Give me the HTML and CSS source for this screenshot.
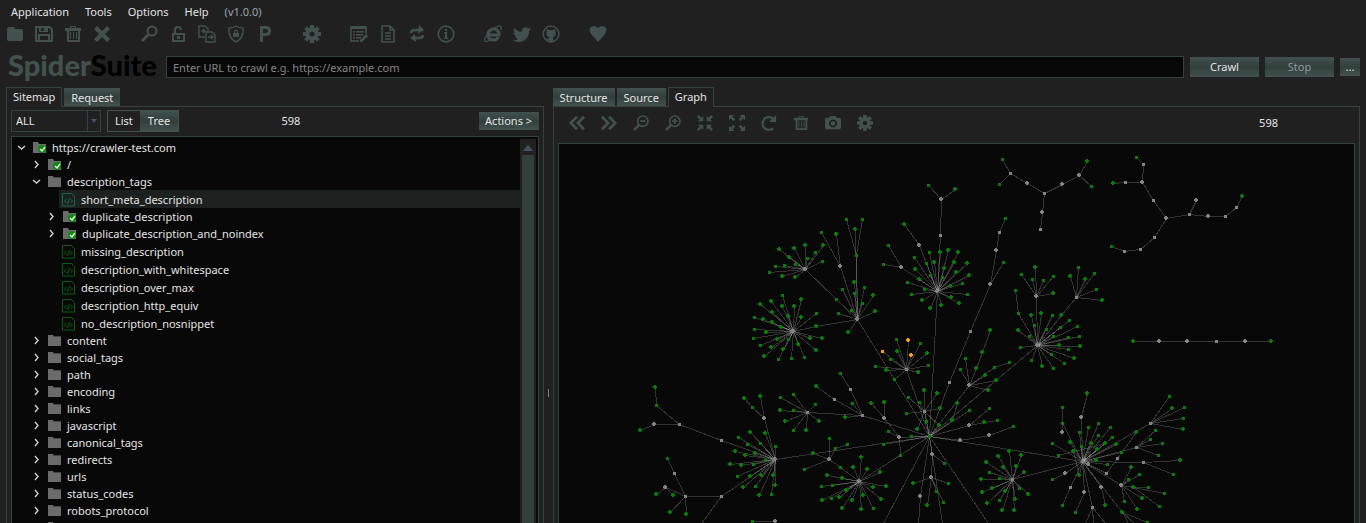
FILE: index.html
```html
<!DOCTYPE html>
<html lang="en">
<head>
<meta charset="utf-8">
<title>SpiderSuite</title>
<link rel="stylesheet" href="styles.css">
</head>
<body>
<svg class="symbols" aria-hidden="true">
  <symbol id="folder" viewBox="0 0 18 18"><path d="M1 4q0-2 2-2h4q2 0 2 2h6q2 0 2 2v8q0 2-2 2H3q-2 0-2-2z"/></symbol>
  <symbol id="save" viewBox="0 0 18 18"><path fill-rule="evenodd" d="M0 1h15l3 3v13H0zM2 3v12h1V9h12v6h1V5l-2-2h-1v4H4V3zm4 0v3h3V3zm-1 8v4h8v-4z"/></symbol>
  <symbol id="trash" viewBox="0 0 18 18"><path fill-rule="evenodd" d="M6 1h6v2h5v3h-1v11H3V6H1V3h5zm1 1v1h4V2zM5 6v9h9V6zm1 1h1v7H6zm3 0h1v7H9zm3 0h1v7h-1z"/></symbol>
  <symbol id="close" viewBox="0 0 18 18"><path d="M4 1l5 5 5-5 3 3-5 5 5 5-3 3-5-5-5 5-3-3 5-5-5-5z"/></symbol>
  <symbol id="search" viewBox="0 0 18 18"><circle cx="12" cy="6" r="4.5" fill="none" stroke="currentColor" stroke-width="2"/><path d="M7 9l2 2-6 6-2-2z"/></symbol>
  <symbol id="unlock" viewBox="0 0 18 18"><path fill-rule="evenodd" d="M3 8h2V5q0-4 4-4t4 4h-2q0-2-2-2T7 5v3h9v9H3zm2 2v5h9v-5zm3 1h3v3H8z"/></symbol>
  <symbol id="transfer" viewBox="0 0 18 18"><path fill="none" stroke="currentColor" stroke-width="1.4" d="M7 12H1V1h6l3 3v2M8 7h6l3 3v7H8zM3 6h4M5 4l2 2-2 2M10 12h5M13 10l2 2-2 2"/></symbol>
  <symbol id="shield" viewBox="0 0 18 18"><path fill="none" stroke="currentColor" stroke-width="1.5" d="M9 1q3 2 7 2 1 10-7 14Q1 13 2 3q4 0 7-2z"/><path d="M6 8h1V6q2-3 4 0v2h1v4H6zm2 0h2V6.500q-1-1-2 0z"/></symbol>
  <symbol id="parking" viewBox="0 0 18 18"><path fill-rule="evenodd" d="M4 1h6q5 0 5 5t-5 5H7v6H4zm3 3v4h3q2 0 2-2t-2-2z"/></symbol>
  <symbol id="gear" viewBox="0 0 18 18"><path fill="none" stroke="currentColor" stroke-width="4" d="M9 0v4M9 14v4M0 9h4M14 9h4M2.600 2.600l3 3M12.400 12.400l3 3M15.400 2.600l-3 3M2.600 15.400l3-3"/><circle cx="9" cy="9" r="4.500" fill="none" stroke="currentColor" stroke-width="4"/></symbol>
  <symbol id="form" viewBox="0 0 18 18"><path fill="none" stroke="currentColor" stroke-width="1.500" d="M9 16H1V2h15v7"/><path d="M1 1h15v3H1zm2 5h2v1.500H3zm3 0h8v1.500H6zM3 9h2v1.500H3zm3 0h7v1.500H6zm-3 3h2v1.500H3zm3 0h5v1.500H6zm10-3l2 2-6 6h-2v-2z"/></symbol>
  <symbol id="doc" viewBox="0 0 18 18"><path fill="none" stroke="currentColor" stroke-width="1.600" d="M4 1h7l4 4v12H3V1zM11 1v4h4M6 8h6M6 11h6M6 14h6"/></symbol>
  <symbol id="sync" viewBox="0 0 18 18"><path fill="none" stroke="currentColor" stroke-width="2.400" d="M3 8q0-3 4-3h5M15 10q0 3-4 3H6"/><path d="M11 0l5 5-6 4zM7 9l1 8-6-4z"/></symbol>
  <symbol id="info" viewBox="0 0 18 18"><circle cx="9" cy="9" r="7.800" fill="none" stroke="currentColor" stroke-width="1.700"/><path d="M8 4h2v2H8zM7 7h3v6h1v1H7v-1h1V8H7z"/></symbol>
  <symbol id="browser" viewBox="0 0 18 18"><path fill="none" stroke="currentColor" stroke-width="3" d="M5 10h10q0-6-5-6-6 0-6 6 0 5 6 5 3 0 4-3"/><path fill="none" stroke="currentColor" stroke-width="1.300" d="M17 5q1-5-3-4-8 3-13 12-1 5 3 3l3-1"/></symbol>
  <symbol id="bird" viewBox="0 0 16 16"><path d="M5 15c6 0 9.300-5 9.300-9.300v-.4A6.700 6.700 0 0 0 16 3.500a6.500 6.500 0 0 1-1.900.5 3.300 3.300 0 0 0 1.400-1.800 6.500 6.500 0 0 1-2 .8A3.300 3.300 0 0 0 7.900 6 9.300 9.300 0 0 1 1.100 2.600a3.300 3.300 0 0 0 1 4.400A3.300 3.300 0 0 1 .6 6.600a3.300 3.300 0 0 0 2.600 3.200 3.300 3.300 0 0 1-1.400.1 3.300 3.300 0 0 0 3 2.300A6.600 6.600 0 0 1 0 13.600 9.300 9.300 0 0 0 5 15"/></symbol>
  <symbol id="cat" viewBox="0 0 18 18"><circle cx="9" cy="9" r="7.900" fill="none" stroke="currentColor" stroke-width="1.500"/><path d="M5 4l2 1.200q2-.6 4 0L13 4q.7 1.300.3 2.600Q14 8 13.600 9.500 13 12 10.500 12.200q.7.800.7 1.800v3H7v-2q-2 .2-3-2 1.500 0 3 .8 0-1 .6-1.600Q5 12 4.400 9.500 4 8 4.700 6.600 4.300 5.300 5 4z"/></symbol>
  <symbol id="heart" viewBox="0 0 18 18"><path d="M9 17L2 9Q0 6 1 3q3-4 8 0 5-4 8 0 1 3-1 6z"/></symbol>
  <symbol id="back" viewBox="0 0 18 18"><path fill="none" stroke="currentColor" stroke-width="3" d="M9 2L2 9l7 7M17 2l-7 7 7 7"/></symbol>
  <symbol id="forward" viewBox="0 0 18 18"><path fill="none" stroke="currentColor" stroke-width="3" d="M1 2l7 7-7 7M9 2l7 7-7 7"/></symbol>
  <symbol id="zoom-out" viewBox="0 0 18 18"><circle cx="11" cy="7" r="5.800" fill="none" stroke="currentColor" stroke-width="1.800"/><path d="M8 6h6v2H8zM6 10l2 2-6 6-2-2z"/></symbol>
  <symbol id="zoom-in" viewBox="0 0 18 18"><circle cx="11" cy="7" r="5.800" fill="none" stroke="currentColor" stroke-width="1.800"/><path d="M8 6h2V4h2v2h2v2h-2v2h-2V8H8zM6 10l2 2-6 6-2-2z"/></symbol>
  <symbol id="shrink" viewBox="0 0 18 18"><path d="M2 0l3 3 2-2v6H1l2-2-3-3zM16 0l-3 3-2-2v6h6l-2-2 3-3zM2 18l3-3 2 2v-6H1l2 2-3 3zM16 18l-3-3-2 2v-6h6l-2 2 3 3z"/></symbol>
  <symbol id="expand" viewBox="0 0 18 18"><path d="M0 0h6L4 2l3 3-2 2-3-3-2 2zM18 0h-6l2 2-3 3 2 2 3-3 2 2zM0 18h6l-2-2 3-3-2-2-3 3-2-2zM18 18h-6l2-2-3-3 2-2 3 3 2-2z"/></symbol>
  <symbol id="reload" viewBox="0 0 18 18"><path fill="none" stroke="currentColor" stroke-width="2.400" d="M14 4Q9 0 4 4 0 9 3 14q5 5 11 1"/><path d="M17 0v8H9z"/></symbol>
  <symbol id="camera" viewBox="0 0 18 18"><path fill-rule="evenodd" d="M0 5q0-2 2-2h3l1-2h6l1 2h3q2 0 2 2v9q0 2-2 2H2q-2 0-2-2zm9 0a4.500 4.500 0 1 0 .1 0zm0 2a2.500 2.500 0 1 1-.1 0z"/></symbol>
  <symbol id="dir" viewBox="0 0 14 13"><path fill="#6b6b6b" d="M0 1h5l1 2h7v9H0z"/><path fill="#444" d="M6 2h7v1H6z"/></symbol>
  <symbol id="dir-ok" viewBox="0 0 14 13"><path fill="#6b6b6b" d="M0 1h5l1 2h7v9H0z"/><circle cx="9" cy="8" r="4" fill="#0b8a0b"/><path fill="none" stroke="#eee" stroke-width="1.400" d="M7 8l2 2 3-4"/></symbol>
  <symbol id="file" viewBox="0 0 14 14"><path fill="none" stroke="currentColor" d="M.5.5h9l3 3v9.500H.5zM4.500 6L2.500 8l2 2M8.500 6l2 2-2 2M7.500 5l-2 6"/></symbol>
  <symbol id="open" viewBox="0 0 9 9"><path fill="none" stroke="#d0d0d0" stroke-width="1.400" d="M1 3l3.500 3L8 3"/></symbol>
  <symbol id="shut" viewBox="0 0 9 9"><path fill="none" stroke="#d0d0d0" stroke-width="1.400" d="M3 1l3 3.500L3 8"/></symbol>
</svg>

<header class="header">
  <nav class="menu">
    <button>Application</button><button>Tools</button><button>Options</button><button>Help</button>
    <span class="version">(v1.0.0)</span>
  </nav>
  <div class="toolbar">
    <div class="group">
      <button aria-label="Open"><svg><use href="#folder"/></svg></button>
      <button aria-label="Save"><svg><use href="#save"/></svg></button>
      <button aria-label="Delete"><svg><use href="#trash"/></svg></button>
      <button aria-label="Close"><svg><use href="#close"/></svg></button>
    </div>
    <div class="group">
      <button aria-label="Search"><svg><use href="#search"/></svg></button>
      <button aria-label="Decode"><svg><use href="#unlock"/></svg></button>
      <button aria-label="Compare"><svg><use href="#transfer"/></svg></button>
      <button aria-label="Security"><svg><use href="#shield"/></svg></button>
      <button aria-label="Proxy"><svg><use href="#parking"/></svg></button>
    </div>
    <div class="group">
      <button aria-label="Settings"><svg><use href="#gear"/></svg></button>
    </div>
    <div class="group">
      <button aria-label="Notes"><svg><use href="#form"/></svg></button>
      <button aria-label="Report"><svg><use href="#doc"/></svg></button>
      <button aria-label="Update"><svg><use href="#sync"/></svg></button>
      <button aria-label="About"><svg><use href="#info"/></svg></button>
    </div>
    <div class="group">
      <button aria-label="Website"><svg><use href="#browser"/></svg></button>
      <button aria-label="Twitter"><svg><use href="#bird"/></svg></button>
      <button aria-label="GitHub"><svg><use href="#cat"/></svg></button>
    </div>
    <div class="group">
      <button aria-label="Sponsor"><svg><use href="#heart"/></svg></button>
    </div>
  </div>
  <form class="crawl">
    <div class="logo">Spider<span class="logo-dark">Suite</span></div>
    <input class="url" type="text" aria-label="URL to crawl" placeholder="Enter URL to crawl e.g. https://example.com">
    <button class="btn btn-wide" type="button">Crawl</button>
    <button class="btn btn-wide" type="button" disabled>Stop</button>
    <button class="btn btn-more" type="button">...</button>
  </form>
</header>

<main class="panes">
  <section class="pane pane-left">
    <div class="tabs" role="tablist">
      <button class="tab active" role="tab" aria-selected="true">Sitemap</button>
      <button class="tab" role="tab" aria-selected="false">Request</button>
    </div>
    <div class="panel">
      <div class="filters">
        <div class="combo"><select aria-label="Filter"><option>ALL</option></select></div>
        <div class="toggle"><button>List</button><button class="on">Tree</button></div>
        <output class="total">598</output>
        <button class="btn btn-actions">Actions &gt;</button>
      </div>
      <div class="treebox">
        <ul class="tree">
          <li class="row"><svg class="arrow"><use href="#open"/></svg><svg class="icon"><use href="#dir-ok"/></svg>https://crawler-test.com</li>
          <li class="row l1"><svg class="arrow"><use href="#shut"/></svg><svg class="icon"><use href="#dir-ok"/></svg>/</li>
          <li class="row l1"><svg class="arrow"><use href="#open"/></svg><svg class="icon"><use href="#dir"/></svg>description_tags</li>
          <li class="row file selected"><svg class="icon"><use href="#file"/></svg><span class="name">short_meta_description</span></li>
          <li class="row l2"><svg class="arrow"><use href="#shut"/></svg><svg class="icon"><use href="#dir-ok"/></svg>duplicate_description</li>
          <li class="row l2"><svg class="arrow"><use href="#shut"/></svg><svg class="icon"><use href="#dir-ok"/></svg>duplicate_description_and_noindex</li>
          <li class="row file"><svg class="icon"><use href="#file"/></svg><span class="name">missing_description</span></li>
          <li class="row file"><svg class="icon"><use href="#file"/></svg><span class="name">description_with_whitespace</span></li>
          <li class="row file"><svg class="icon"><use href="#file"/></svg><span class="name">description_over_max</span></li>
          <li class="row file"><svg class="icon"><use href="#file"/></svg><span class="name">description_http_equiv</span></li>
          <li class="row file"><svg class="icon"><use href="#file"/></svg><span class="name">no_description_nosnippet</span></li>
          <li class="row l1"><svg class="arrow"><use href="#shut"/></svg><svg class="icon"><use href="#dir"/></svg>content</li>
          <li class="row l1"><svg class="arrow"><use href="#shut"/></svg><svg class="icon"><use href="#dir"/></svg>social_tags</li>
          <li class="row l1"><svg class="arrow"><use href="#shut"/></svg><svg class="icon"><use href="#dir"/></svg>path</li>
          <li class="row l1"><svg class="arrow"><use href="#shut"/></svg><svg class="icon"><use href="#dir"/></svg>encoding</li>
          <li class="row l1"><svg class="arrow"><use href="#shut"/></svg><svg class="icon"><use href="#dir"/></svg>links</li>
          <li class="row l1"><svg class="arrow"><use href="#shut"/></svg><svg class="icon"><use href="#dir"/></svg>javascript</li>
          <li class="row l1"><svg class="arrow"><use href="#shut"/></svg><svg class="icon"><use href="#dir"/></svg>canonical_tags</li>
          <li class="row l1"><svg class="arrow"><use href="#shut"/></svg><svg class="icon"><use href="#dir"/></svg>redirects</li>
          <li class="row l1"><svg class="arrow"><use href="#shut"/></svg><svg class="icon"><use href="#dir"/></svg>urls</li>
          <li class="row l1"><svg class="arrow"><use href="#shut"/></svg><svg class="icon"><use href="#dir"/></svg>status_codes</li>
          <li class="row l1"><svg class="arrow"><use href="#shut"/></svg><svg class="icon"><use href="#dir"/></svg>robots_protocol</li>
          <li class="row l1"><svg class="arrow"></svg><svg class="icon"><use href="#dir"/></svg></li>
        </ul>
        <div class="scroll"><span class="scroll-up"></span><span class="scroll-thumb"></span></div>
      </div>
    </div>
  </section>
  <div class="splitter"><span class="grip"></span></div>
  <section class="pane pane-right">
    <div class="tabs" role="tablist">
      <button class="tab" role="tab" aria-selected="false">Structure</button>
      <button class="tab" role="tab" aria-selected="false">Source</button>
      <button class="tab active" role="tab" aria-selected="true">Graph</button>
    </div>
    <div class="panel">
      <div class="graph-tools">
        <button aria-label="Back"><svg><use href="#back"/></svg></button>
        <button aria-label="Forward"><svg><use href="#forward"/></svg></button>
        <button aria-label="Zoom out"><svg><use href="#zoom-out"/></svg></button>
        <button aria-label="Zoom in"><svg><use href="#zoom-in"/></svg></button>
        <button aria-label="Shrink"><svg><use href="#shrink"/></svg></button>
        <button aria-label="Expand"><svg><use href="#expand"/></svg></button>
        <button aria-label="Reload"><svg><use href="#reload"/></svg></button>
        <button aria-label="Clear"><svg><use href="#trash"/></svg></button>
        <button aria-label="Capture"><svg><use href="#camera"/></svg></button>
        <button aria-label="Graph settings"><svg><use href="#gear"/></svg></button>
        <output class="count">598</output>
      </div>
      <div class="canvas"><svg class="graph" role="img" aria-label="Site graph"><g id="scene"></g></svg></div>
    </div>
  </section>
</main>
<script src="graph.js"></script>
</body>
</html>
```
FILE: styles.css
```css
* { box-sizing: border-box; }

body {
  margin: 0;
  height: 100vh;
  display: flex;
  flex-direction: column;
  overflow: hidden;
  background: #202020;
  color: #e4e4e4;
  font: 11px/16px "Noto Sans", "Open Sans", sans-serif;
}

button, input, select {
  font: inherit;
  color: inherit;
  margin: 0;
  padding: 0;
  border: 0;
  border-radius: 0;
  background: none;
}

.symbols { display: none; }

.header { flex: none; }

.menu {
  display: flex;
  gap: 16px;
  padding: 4px 11px;
}

.version { color: #9ba4b0; }

.toolbar {
  display: flex;
  gap: 29px;
  padding: 1px 6px 0;
  color: #42514e;
}

.group {
  display: flex;
  gap: 11px;
}

.toolbar button, .toolbar svg {
  display: block;
  width: 18px;
  height: 18px;
}

svg { fill: currentColor; }

.crawl {
  display: flex;
  align-items: center;
  gap: 6px;
  height: 36px;
  margin-top: 6px;
  padding: 0 6px 0 8px;
}

.logo {
  width: 152px;
  color: #42514e;
  font: 900 29px/32px Lato, sans-serif;
  padding-bottom: 4px;
}

.logo-dark { color: #000; }

.url {
  flex: 1;
  min-width: 0;
  height: 22px;
  padding: 0 6px;
  border: 1px solid #34423f;
  background: #080808;
}

.url::placeholder { color: #858585; opacity: 1; }

.btn {
  height: 20px;
  background: linear-gradient(#42514e, #32403c 50%, #42514e);
}

.btn:disabled { color: #8b9a9c; }
.btn-wide { width: 69px; }
.btn-more { width: 20px; height: 18px; }

.panes {
  flex: 1;
  min-height: 0;
  display: flex;
  padding: 2px 6px 0;
}

.pane {
  display: flex;
  flex-direction: column;
  min-width: 0;
}

.pane-left { flex: 538; }
.pane-right { flex: 808; }

.tabs {
  display: flex;
  align-items: flex-end;
  gap: 2px;
  height: 19px;
  flex: none;
}

.tab {
  height: 18px;
  padding: 1px 7px 0;
  background: linear-gradient(#42514e, #32403c 50%, #42514e);
}

.tab.active {
  position: relative;
  height: 20px;
  margin-bottom: -1px;
  padding: 0 6px 2px;
  border: 1px solid #34423f;
  border-bottom: 0;
  background: #202020;
}

.panel {
  flex: 1;
  min-height: 0;
  display: flex;
  flex-direction: column;
  padding: 0 4px;
  border: 1px solid #34423f;
  border-bottom: 0;
}

.filters {
  display: flex;
  align-items: center;
  padding: 3px 0 4px;
}

.combo {
  position: relative;
  width: 90px;
  height: 22px;
  border: 1px solid #34423f;
}

.combo select {
  appearance: none;
  width: 100%;
  height: 20px;
  padding: 0 4px;
}

.combo::after {
  content: "";
  position: absolute;
  top: 8px;
  right: 3px;
  border: 3px solid transparent;
  border-top: 4px solid #465266;
  pointer-events: none;
}

.combo::before {
  content: "";
  position: absolute;
  top: 0;
  bottom: 0;
  right: 12px;
  border-left: 1px solid #34423f;
}

.toggle {
  display: flex;
  height: 22px;
  margin-left: 6px;
  border: 1px solid #42514e;
}

.toggle button { padding: 0 7px; }
.toggle .on { background: linear-gradient(#42514e, #32403c 50%, #42514e); padding: 0 8px; }

.total {
  flex: 1;
  padding-right: 76px;
  text-align: center;
}

.btn-actions {
  width: 60px;
  height: 18px;
}

.treebox {
  flex: 1;
  min-height: 0;
  display: flex;
  border: 1px solid #34423f;
  border-bottom: 0;
  background: #080808;
}

.tree {
  flex: 1;
  margin: 0;
  padding: 2px 0 0;
  list-style: none;
}

.row {
  display: flex;
  align-items: center;
  height: 17px;
  padding-left: 5px;
  white-space: nowrap;
}

.l1 { padding-left: 20px; }
.l2 { padding-left: 35px; }

.arrow {
  width: 9px;
  height: 9px;
  margin-right: 7px;
}

.icon {
  width: 14px;
  height: 13px;
  margin-right: 5px;
}

.file {
  height: 18px;
  margin-left: 47px;
  padding: 2px 0 0 3px;
}

.file .icon { height: 14px; color: #0a610a; }
.selected { background: #1c2120; }
.selected .icon { color: #17684c; }

.scroll {
  width: 16px;
  margin: 2px 2px 0 0;
  padding: 0 2px;
  background: #202020;
}

.scroll-up {
  display: block;
  height: 12px;
  margin: 0 1px 4px;
  border: 5px solid transparent;
  border-top: 6px solid transparent;
  border-bottom: 6px solid #465266;
}

.scroll-thumb {
  display: block;
  height: 100%;
  background: #32403c;
}

.splitter {
  display: flex;
  align-items: center;
  justify-content: center;
  width: 9px;
}

.grip {
  width: 1px;
  height: 8px;
  margin-top: 176px;
  background: #777;
}

.graph-tools {
  display: flex;
  align-items: center;
  gap: 16px;
  height: 36px;
  padding: 0 77px 4px 11px;
  color: #42514e;
}

.graph-tools button, .graph-tools button svg {
  display: block;
  width: 16px;
  height: 16px;
}

.count {
  margin-left: auto;
  color: #e4e4e4;
}

.canvas {
  flex: 1;
  min-height: 0;
  border: 1px solid #34423f;
  border-bottom: 0;
  background: #080808;
}

.graph {
  display: block;
  width: 100%;
  height: 100%;
  shape-rendering: crispEdges;
}

.edge { stroke: #fff; stroke-opacity: 0.18; fill: none; }
.node { fill: #058005; }
.node-g { fill: #858585; }
.node-o { fill: #ffa500; }
```
FILE: graph.js
```js
// Each line lists a node and the nodes it links to.
// Prefixes: g = redirect/group (grey), o = highlighted (orange), x = off-screen.
const links = `
g805,269 > 779,249 789,257 794,248 805,245 815,252 823,245 822,261 807,258 795,264 784,265 775,266 769,272 782,276 795,277 836,299
g857,319 > 836,299 856,255 855,229 854,282 854,293 842,289 864,287 862,303 851,310 838,313 848,332 873,295 875,311 g840,266 816,326
856,255 > 846,219 862,219
g840,266 > 821,232 836,234
g793,331 > 782,295 771,301 760,304 801,299 794,306 782,306 772,312 754,317 763,319 772,322 788,316 801,317 816,313 781,327 754,329 766,332 816,326
g793,331 > 753,338 760,345 771,347 777,339 783,349 788,339 798,344 810,338 822,338 816,350 804,357 791,358 778,359 764,356
g937,291 > g919,245 g901,267 g940,235 914,257 929,252 940,252 948,250 958,252 915,269 926,263 934,262 944,268 954,262 967,263 969,275 956,272 930,275 942,277 962,283 950,285 919,279 907,282 911,294 924,289 922,300 930,308 941,305 951,297 959,303 967,294
g919,245 > 904,224
g901,267 > 888,245 883,264
g940,235 > g941,199
g941,199 > 928,185 955,189
g999,232 > 1005,218 g996,250
g990,284 > g996,250 1003,262 g970,331
g949,382 > g970,331
g1044,193 > g1027,183 g1062,184 g1042,212
g1010,173 > g1027,183 1002,159 999,184
g1079,175 > g1062,184 1087,161 1091,186
g1042,212 > g1040,229
g1036,296 > 1035,267 1021,274 1032,279 1043,280 1053,276 1053,293
g1076,297 > 1078,267 1070,276 1085,279 1094,273 1096,289 1102,300 1061,315
1018,313 > 1015,290
g1037,345 > g1036,296 1018,313 1031,315 1041,313 1052,315 1061,315 1034,325 1018,330 1046,329 1060,327 1069,320 1077,326 1029,336 1053,336 1068,337 1079,336 1080,346 1059,345 1068,349 1074,358 1064,363 1051,354 1053,368 1042,366 1031,360 1020,347
g1143,164 > 1136,157 g1142,182
g1142,182 > g1125,182 g1153,200
g1125,182 > 1113,183
g1166,218 > g1153,200 g1189,214 g1154,237
g1189,214 > g1196,200 g1208,216
g1225,216 > g1208,216 g1236,207
g1236,207 > 1242,196
g1140,249 > g1154,237 g1124,251
g1124,251 > 1111,246
g1159,341 > 1133,341 g1187,341
g1216,341 > g1187,341 g1245,341
g1245,341 > 1271,341
g775,459 > 750,432 738,437 747,444 760,443 735,451 745,455 755,453 730,464 741,465 753,464 765,460 737,476 750,476 761,475 773,475 743,487 755,486 759,495 771,494 775,485 775,446 765,433 g764,418 g721,440 g721,496
g764,418 > 760,396 752,407
752,407 > 744,398
g679,424 > g721,440 656,405 g654,424
656,405 > 655,387
g654,424 > 640,430
g721,496 > g685,496 x701,523
g685,496 > 670,512 686,514 g674,473 g665,487
g674,473 > 667,458
g665,487 > 656,494 673,495
752,521 > g775,521
g807,412 > 780,397 793,394 815,404 819,421 806,430 793,430 785,421 780,410 793,410 g862,415
g862,415 > g834,399 g850,389 852,403 845,417
g834,399 > 816,386
g850,389 > 840,373
g829,459 > 829,438 813,453 804,469 835,448 840,467
835,448 > 847,444
g859,481 > 840,467 861,457 853,467 867,469 827,475 842,478 832,485 821,486 846,490 839,497 831,498 822,500 852,500 842,508 861,509 863,495 880,472 886,486 873,487 881,499 873,508
g906,369 > o882,351 o908,340 o911,355 896,339 920,343 897,351 927,353 890,359 875,366 886,370 894,379 918,372 928,365
g969,385 > 965,358 960,369 976,368 985,375 994,367 996,380 988,390
976,368 > 982,352
982,352 > 990,330
994,367 > 1009,362
g924,411 > 924,390 937,393 908,397 919,402 906,413 940,408 926,421 939,425 917,429
929,436 > g857,319 g937,291 g949,382 g1037,345 g775,459 g862,415 g859,481 g906,369 g969,385 g924,411 911,436 952,420 969,410 g969,425 g960,440 g899,437 883,444 g932,454 g920,496 x883,523 x942,523 x988,523 g1082,461 926,421 939,425
952,420 > 957,403
g969,425 > 984,422 989,408
984,422 > 997,420
g989,435 > g960,440 1013,426
g899,437 > 900,455 g884,418
g884,418 > 871,403 884,402
888,431 > g899,437
g932,454 > 944,463 g931,477
g931,477 > 913,483 948,483 936,491 943,502 927,505
g920,496 > x918,523
g1012,479 > 1009,451 998,456 1021,455 986,462 1003,467 1016,466 1024,472 989,472 999,478 981,479 992,488 982,492 1005,491 1019,488 1028,494 1015,499 999,500 987,503 1002,510 1014,510 g1082,461
1062,423 > 1062,407 g1062,432
g1082,461 > 1062,423 1070,442 1073,451 1052,443 g1081,417 1079,432 1088,427 1098,423 1110,427 1098,435 1112,437 1091,443 1105,443 1116,444 1081,446 1097,449 1121,452 1096,460 1107,464 1079,475
1073,451 > 1079,475
1058,455 > 1105,443
g1081,417 > 1087,393
g1082,461 > g1065,473 g1070,487 g1084,492 g1101,487 g1092,507 1122,512 g1106,473 g1088,464 g1121,485 g1136,447 g1143,462 g1150,423
g1065,473 > 1052,479
g1070,487 > 1062,505
g1084,492 > 1075,512
g1101,487 > 1105,505
g1092,507 > x1085,523 x1093,523 x1105,523
1122,512 > x1128,523 x1134,523 1147,522
g1117,458 > g1106,473 1136,432
g1121,485 > 1131,467 1128,479 1139,474 1133,487 1142,498 1124,501 1137,509
1133,487 > 1148,487 1159,506 1164,493
g1136,447 > 1155,430 1150,439 1162,443 1158,455
g1143,462 > 1173,474 1180,460
g1150,423 > 1169,396 1172,408 1184,407 1183,418 1183,429
`;

const origin = { x: 559, y: 144 };
const nodes = new Map();
const edges = [];

function addNode(token) {
  const [, kind, x, y] = token.match(/^([gox]?)(\d+),(\d+)$/);
  const key = x + "," + y;
  if (!nodes.has(key)) nodes.set(key, { kind, x: x - origin.x, y: y - origin.y });
  return nodes.get(key);
}

for (const line of links.trim().split("\n")) {
  const [from, to] = line.split(" > ");
  const start = addNode(from);
  for (const token of to.split(" ")) edges.push([start, addNode(token)]);
}

function draw(tag, attrs) {
  const el = document.createElementNS("http://www.w3.org/2000/svg", tag);
  for (const name in attrs) el.setAttribute(name, attrs[name]);
  document.getElementById("scene").append(el);
}

for (const [a, b] of edges) {
  draw("line", { class: "edge", x1: a.x + 0.5, y1: a.y + 0.5, x2: b.x + 0.5, y2: b.y + 0.5 });
}
for (const n of nodes.values()) {
  if (n.kind === "x") continue;
  const name = "node node-" + (n.kind || "page");
  if ((n.x + n.y) % 2) {
    draw("rect", { class: name, x: n.x - 2, y: n.y - 1, width: 4, height: 2 });
    draw("rect", { class: name, x: n.x - 1, y: n.y - 2, width: 2, height: 4 });
  } else {
    draw("rect", { class: name, x: n.x - 1, y: n.y - 1, width: 3, height: 3 });
  }
}
```
